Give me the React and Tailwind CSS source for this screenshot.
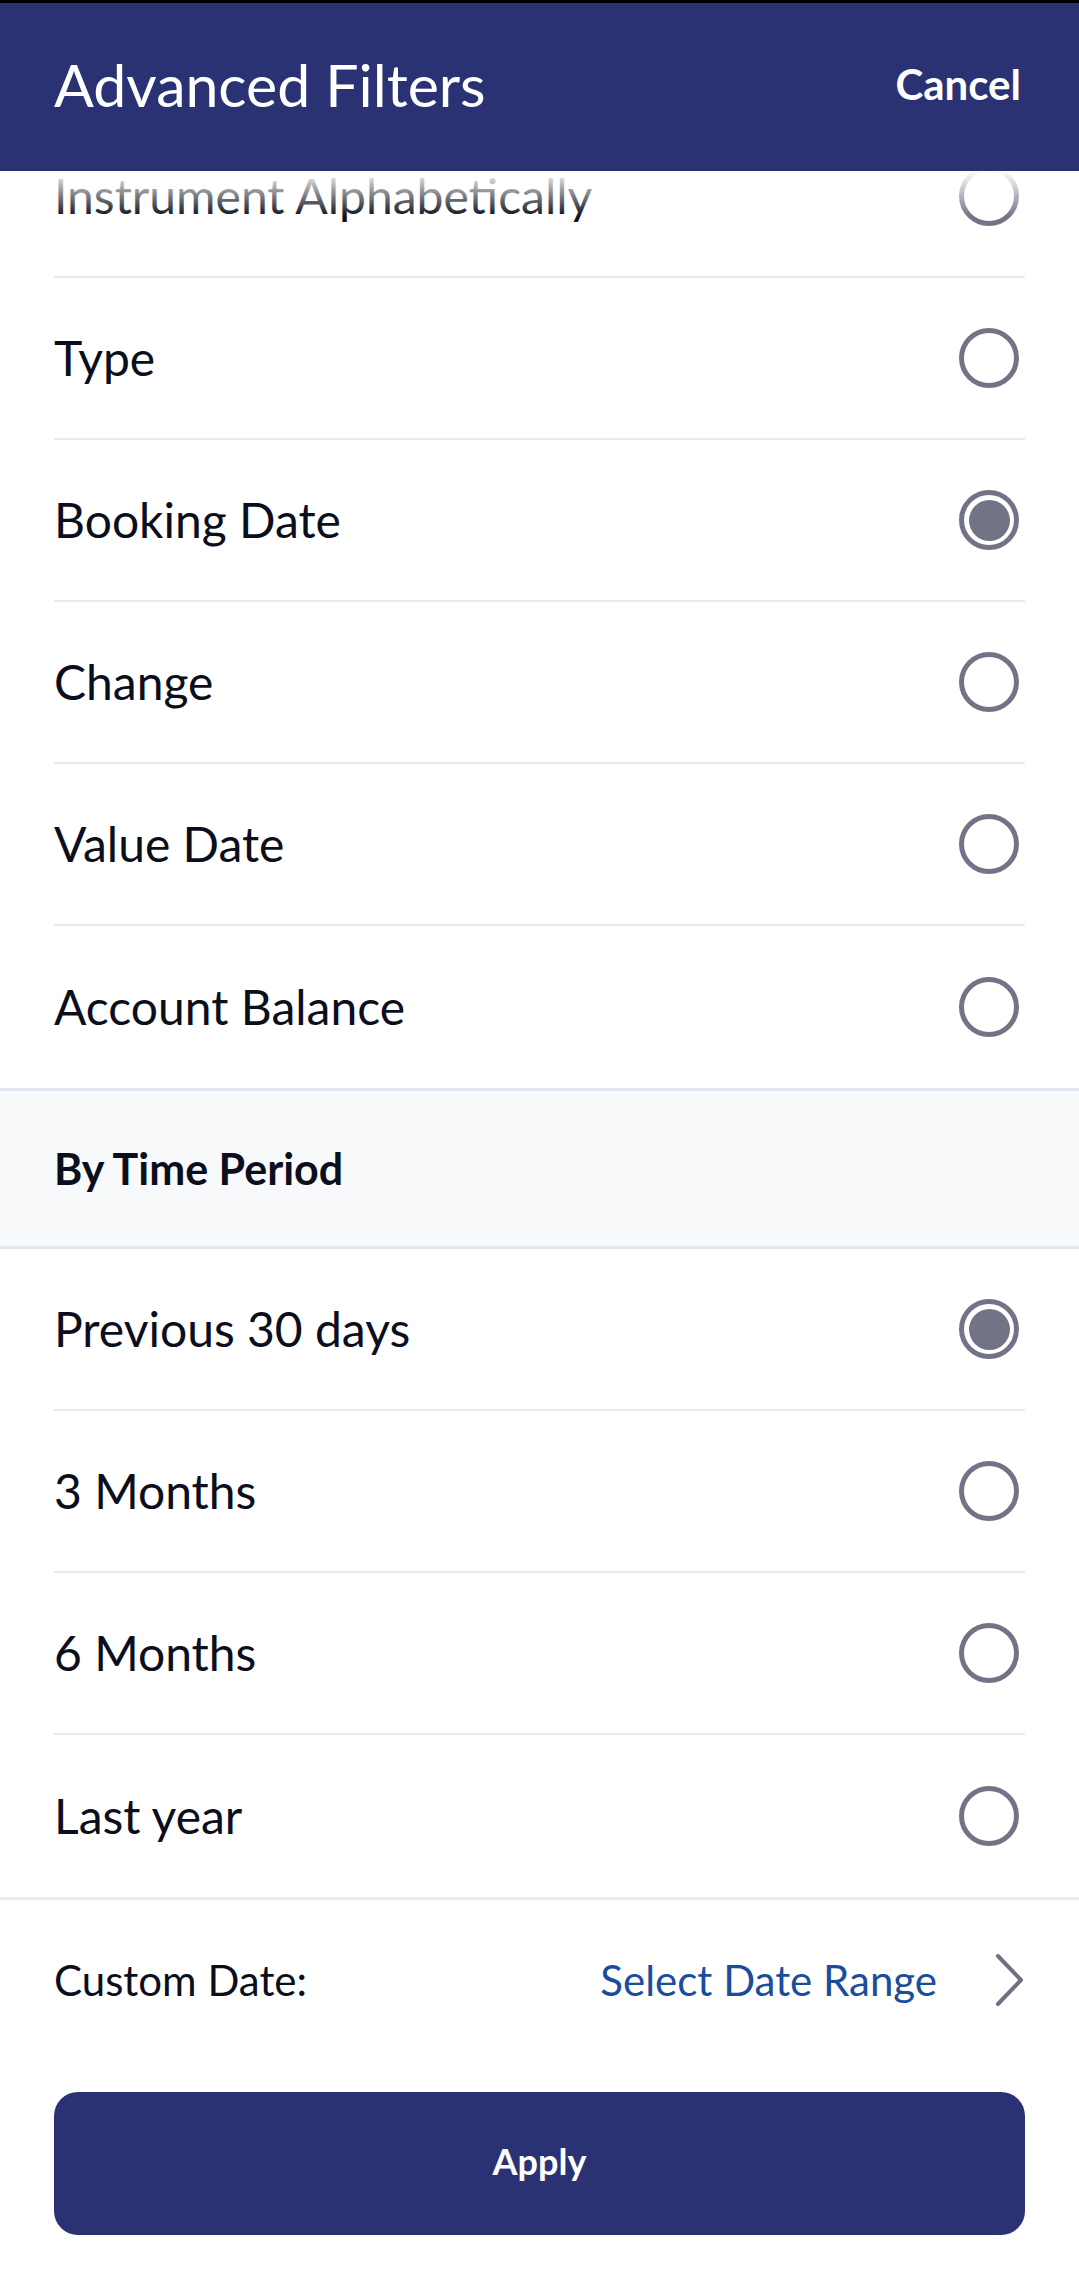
import React from "react";

const font = { fontFamily: "Lato, 'Noto Sans', sans-serif" };

function Radio({ selected }) {
  return (
    <div className="w-[60px] h-[60px] rounded-full border-[5px] border-[#737387] flex items-center justify-center shrink-0">
      {selected && <div className="w-[41px] h-[41px] rounded-full bg-[#737387]" />}
    </div>
  );
}

function Row({ label, selected, last }) {
  return (
    <div
      className={
        "mx-[54px] h-[162px] flex items-center justify-between pr-[6px] " +
        (last ? "" : "border-b-[2px] border-[#e8eaee]")
      }
    >
      <span className="text-[48px] text-[#0b0e1c] leading-none">{label}</span>
      <Radio selected={selected} />
    </div>
  );
}

export default function App() {
  const sortRows = [
    ["Instrument Alphabetically", false],
    ["Type", false],
    ["Booking Date", true],
    ["Change", false],
    ["Value Date", false],
    ["Account Balance", false],
  ];
  const timeRows = [
    ["Previous 30 days", true],
    ["3 Months", false],
    ["6 Months", false],
    ["Last year", false],
  ];
  return (
    <div className="w-[1079px] h-[2295px] bg-white flex flex-col overflow-hidden" style={font}>
      <div className="h-[3px] bg-black shrink-0" />
      <div className="h-[168px] bg-[#2a3274] flex items-center justify-between pl-[54px] pr-[58px] pb-[6px] shrink-0 relative z-10">
        <span className="text-[59px] text-white leading-none">Advanced Filters</span>
        <span className="text-[42px] font-bold text-white leading-none">Cancel</span>
      </div>
      <div className="relative overflow-hidden">
        <div className="absolute left-0 right-0 top-0 h-[46px] bg-gradient-to-b from-white to-transparent z-10" />
        <div className="-mt-[55px]">
          <div className="border-b-[3px] border-[#e0e7ee]">
            {sortRows.map(([l, s], i) => (
              <Row key={l} label={l} selected={s} last={i === sortRows.length - 1} />
            ))}
          </div>
          <div className="h-[158px] bg-[#f8f9fa] flex items-center px-[54px] border-b-[3px] border-[#e0e7ee]">
            <span className="text-[43px] font-bold text-[#0b0e1c] leading-none">By Time Period</span>
          </div>
          <div className="border-b-[3px] border-[#e8ecf0]">
            {timeRows.map(([l, s], i) => (
              <Row key={l} label={l} selected={s} last={i === timeRows.length - 1} />
            ))}
          </div>
          <div className="h-[160px] mx-[54px] flex items-center justify-between">
            <span className="text-[42px] text-[#0b0e1c] leading-none">Custom Date:</span>
            <div className="flex items-center gap-[58px]">
              <span className="text-[42px] text-[#1a4d9c] leading-none">Select Date Range</span>
              <svg width="30" height="54" viewBox="0 0 30 54" fill="none">
                <path d="M3 3 L26 27 L3 51" stroke="#707083" strokeWidth="4" strokeLinecap="round" strokeLinejoin="round" />
              </svg>
            </div>
          </div>
          <div className="mx-[54px] mt-[32px] h-[143px] rounded-[24px] bg-[#2a3274] flex items-center justify-center pb-[6px]">
            <span className="text-[36px] font-bold text-white leading-none">Apply</span>
          </div>
        </div>
      </div>
    </div>
  );
}
